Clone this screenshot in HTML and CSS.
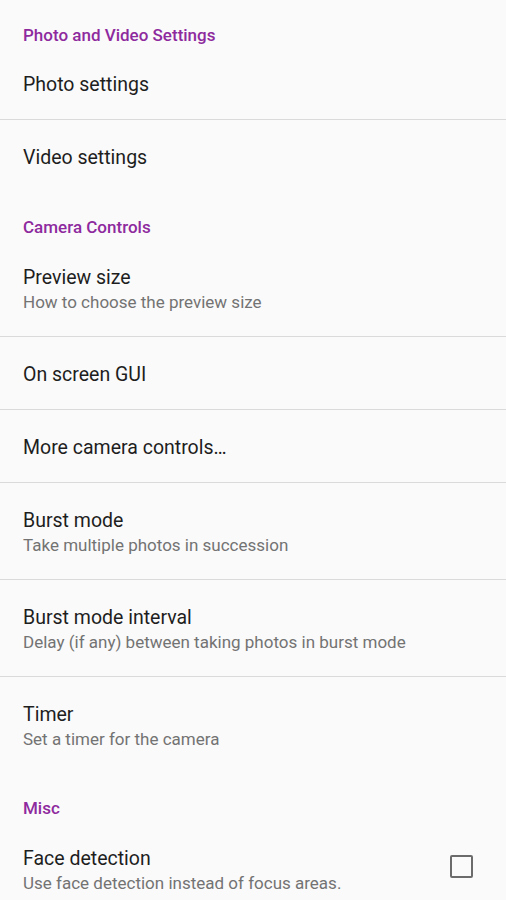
FILE: index.html
```html
<!DOCTYPE html>
<html>
<head>
<meta charset="utf-8">
<link rel="stylesheet" href="styles.css">
</head>
<body>
<div class="screen">
  <div class="category first">Photo and Video Settings</div>
  <div class="pref single divided"><div class="title">Photo settings</div></div>
  <div class="pref single"><div class="title">Video settings</div></div>

  <div class="category">Camera Controls</div>
  <div class="pref double divided"><div class="title">Preview size</div><div class="summary">How to choose the preview size</div></div>
  <div class="pref single divided"><div class="title">On screen GUI</div></div>
  <div class="pref single divided"><div class="title">More camera controls…</div></div>
  <div class="pref double divided"><div class="title">Burst mode</div><div class="summary">Take multiple photos in succession</div></div>
  <div class="pref double divided"><div class="title">Burst mode interval</div><div class="summary">Delay (if any) between taking photos in burst mode</div></div>
  <div class="pref double"><div class="title">Timer</div><div class="summary">Set a timer for the camera</div></div>

  <div class="category">Misc</div>
  <div class="pref double with-widget">
    <div class="texts"><div class="title">Face detection</div><div class="summary">Use face detection instead of focus areas.</div></div>
    <div class="checkbox"></div>
  </div>
</div>
</body>
</html>
```

FILE: styles.css
```css
html, body {
  margin: 0;
  padding: 0;
  background: #fafafa;
}
body {
  font-family: Roboto, "Noto Sans", sans-serif;
  overflow: hidden;
}
.screen {
  width: 506px;
  height: 900px;
  overflow: hidden;
  background: #fafafa;
}
.category {
  height: 48px;
  box-sizing: border-box;
  padding: 24px 23px 0;
  font-size: 17px;
  line-height: 22px;
  font-weight: 500;
  color: #8e2a9e;
}
.category.first {
  height: 47px;
}
.pref {
  box-sizing: content-box;
  padding: 0 23px;
  display: flex;
  flex-direction: column;
  justify-content: center;
}
.pref.single {
  height: 68px;
  padding-top: 4px;
}
.pref.double {
  height: 94px;
  padding-top: 2px;
}
.pref.divided {
  border-bottom: 1px solid #dadada;
}
.title {
  font-size: 19.5px;
  line-height: 24px;
  color: #1e1e1e;
}
.summary {
  font-size: 17px;
  line-height: 22px;
  margin-top: 1px;
  color: #737373;
}
.pref.with-widget {
  flex-direction: row;
  align-items: center;
  justify-content: space-between;
  padding-right: 33px;
}
.checkbox {
  width: 19px;
  height: 19px;
  border: 2.5px solid #6b6b6b;
  border-radius: 2px;
  margin-bottom: 8px;
}
```
